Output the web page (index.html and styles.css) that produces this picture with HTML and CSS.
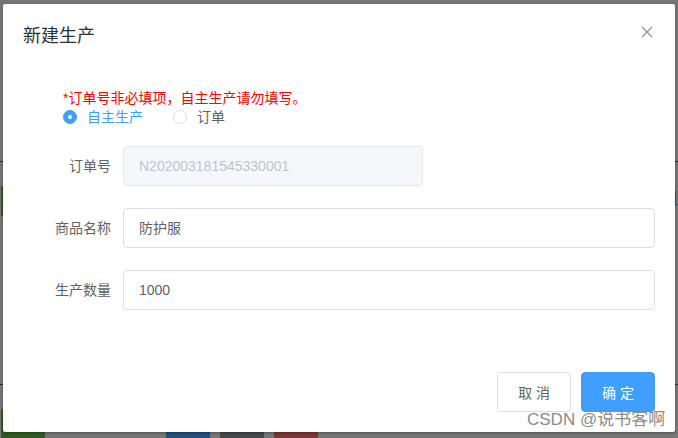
FILE: index.html
```html
<!DOCTYPE html>
<html lang="zh-CN">
<head>
<meta charset="utf-8">
<title>新建生产</title>
<link rel="stylesheet" href="styles.css">
</head>
<body>
<div class="page">
  <div class="hline"></div>
  <div class="toolbar"><span class="pbtn pbtn-green"></span><span class="right-mark"></span></div>
  <div class="hline hline-low"></div>
  <div class="ops">
    <span class="pbtn pbtn-green"></span>
    <span class="pbtn pbtn-blue"></span>
    <span class="pbtn pbtn-gray"></span>
    <span class="pbtn pbtn-red"></span>
  </div>
</div>

<div class="dialog">
  <div class="dialog-header">
    <span class="dialog-title">新建生产</span>
    <button class="dialog-close" type="button" aria-label="关闭">
      <svg width="12" height="12" viewBox="0 0 12 12"><path d="M1 1L11 11M11 1L1 11" stroke="#909399" stroke-width="1.2" fill="none"/></svg>
    </button>
  </div>
  <div class="dialog-body">
    <div class="tip">
      <div class="tip-text">*订单号非必填项，自主生产请勿填写。</div>
      <div class="radios">
        <label class="radio is-checked"><span class="radio-dot"></span><span class="radio-label">自主生产</span></label>
        <label class="radio"><span class="radio-dot"></span><span class="radio-label">订单</span></label>
      </div>
    </div>
    <div class="form-item">
      <div class="form-label">订单号</div>
      <div class="form-content"><div class="input input-disabled input-short">N202003181545330001</div></div>
    </div>
    <div class="form-item">
      <div class="form-label">商品名称</div>
      <div class="form-content"><div class="input">防护服</div></div>
    </div>
    <div class="form-item">
      <div class="form-label">生产数量</div>
      <div class="form-content"><div class="input">1000</div></div>
    </div>
  </div>
  <div class="dialog-footer">
    <button class="btn" type="button">取 消</button>
    <button class="btn btn-primary" type="button">确 定</button>
  </div>
</div>

<div class="watermark">CSDN @说书客啊</div>
</body>
</html>
```

FILE: styles.css
```css
* { box-sizing: border-box; }

html, body {
  margin: 0;
  padding: 0;
}

body {
  width: 678px;
  height: 438px;
  overflow: hidden;
  position: relative;
  background: #767676;
  font-family: "Liberation Sans", "Noto Sans CJK SC", sans-serif;
  font-size: 14px;
}

/* dimmed page behind the modal */
.page {
  padding-top: 161px;
}

.hline {
  height: 1px;
  background: #2c2c2c;
}

.toolbar {
  margin-top: 24px;
  height: 30px;
  display: flex;
  justify-content: space-between;
  align-items: flex-start;
}

.right-mark {
  display: block;
  margin-top: 5px;
  width: 3px;
  height: 14px;
  border-left: 1px solid #1f4f80;
  border-bottom: 1px solid #1f4f80;
}

.hline-low {
  margin-top: 168px;
}

.ops {
  margin-top: 24px;
  display: flex;
  padding-left: 1px;
}

.pbtn {
  display: block;
  width: 44px;
  height: 30px;
}

.pbtn-green { background: #2f5a1f; }
.pbtn-blue { background: #1f4f80; margin-left: 121px; }
.pbtn-gray { background: #454648; margin-left: 10px; }
.pbtn-red { background: #7a3434; margin-left: 10px; }

.toolbar .pbtn-green { margin-left: 1px; }

/* dialog */
.dialog {
  position: absolute;
  top: 4px;
  left: 3px;
  width: 672px;
  background: #fff;
  border-radius: 2px;
  box-shadow: 0 1px 3px rgba(0, 0, 0, 0.3);
}

.dialog-header {
  position: relative;
  padding: 20px 20px 10px;
}

.dialog-title {
  display: block;
  font-size: 18px;
  line-height: 24px;
  color: #303133;
}

.dialog-close {
  position: absolute;
  top: 22px;
  right: 22px;
  width: 12px;
  height: 12px;
  padding: 0;
  border: 0;
  background: none;
  display: flex;
}

.dialog-body {
  padding: 30px 20px;
}

.tip {
  margin-left: 40px;
  margin-bottom: 20px;
}

.tip-text {
  color: #ff0000;
  font-size: 14px;
  line-height: 20px;
}

.radios {
  display: flex;
  height: 18px;
  align-items: center;
}

.radio {
  display: flex;
  align-items: center;
  margin-right: 30px;
  color: #606266;
  line-height: 18px;
}

.radio-dot {
  width: 14px;
  height: 14px;
  border: 1px solid #dcdfe6;
  border-radius: 50%;
  background: #fff;
  position: relative;
}

.radio.is-checked .radio-dot {
  border-color: #409eff;
  background: #409eff;
}

.radio.is-checked .radio-dot::after {
  content: "";
  position: absolute;
  left: 50%;
  top: 50%;
  width: 4px;
  height: 4px;
  margin: -2px 0 0 -2px;
  border-radius: 50%;
  background: #fff;
}

.radio-label {
  padding-left: 10px;
}

.radio.is-checked .radio-label {
  color: #409eff;
}

.form-item {
  display: flex;
  margin-bottom: 22px;
}

.form-label {
  width: 100px;
  flex: none;
  padding-right: 12px;
  text-align: right;
  line-height: 40px;
  color: #606266;
}

.form-content {
  flex: 1;
}

.input {
  height: 40px;
  line-height: 38px;
  padding: 0 15px;
  border: 1px solid #dcdfe6;
  border-radius: 4px;
  color: #606266;
  background: #fff;
}

.input-short {
  width: 300px;
}

.input-disabled {
  background: #f5f7fa;
  border-color: #e4e7ed;
  color: #c0c4cc;
}

.dialog-footer {
  padding: 10px 20px 20px;
  display: flex;
  justify-content: flex-end;
  gap: 10px;
}

.btn {
  height: 40px;
  padding: 0 20px;
  border: 1px solid #dcdfe6;
  border-radius: 4px;
  background: #fff;
  color: #606266;
  font-family: inherit;
  font-size: 14px;
  white-space: pre;
}

.btn-primary {
  background: #409eff;
  border-color: #409eff;
  color: #fff;
}

.watermark {
  position: absolute;
  left: 527px;
  top: 409px;
  font-size: 17px;
  line-height: 22px;
  color: #8c8c8c;
  white-space: nowrap;
}
```
